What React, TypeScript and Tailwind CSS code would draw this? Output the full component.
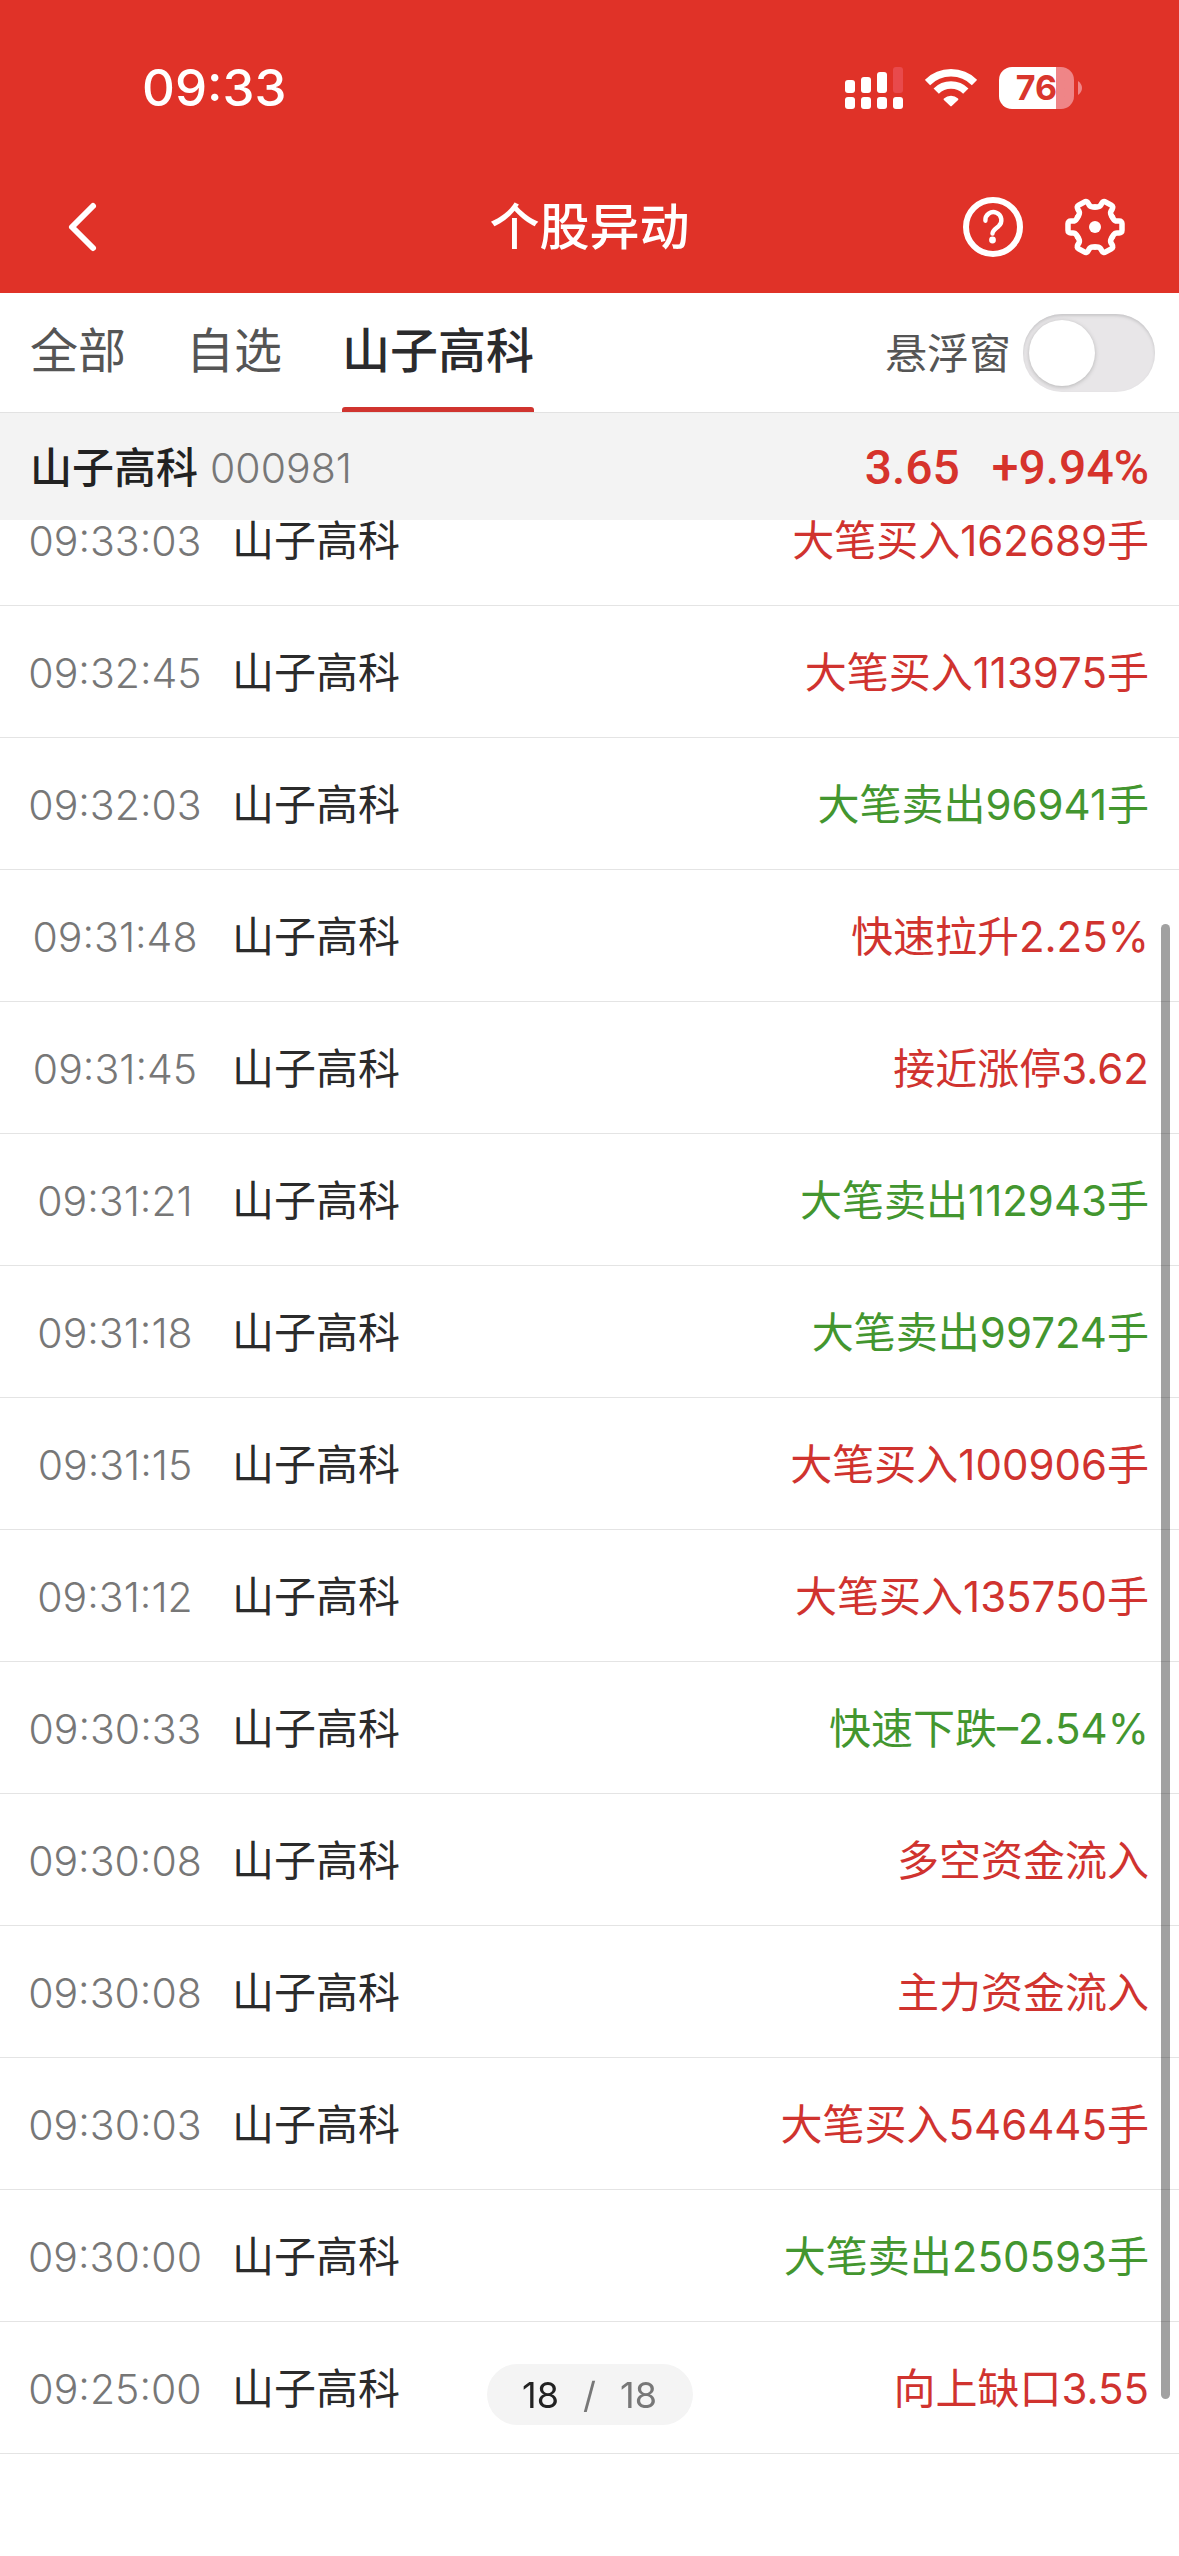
type Row = {
  time: string;
  event: string;
  tone: "up" | "down";
};

const STOCK = "山子高科";

const rows: Row[] = [
  { time: "09:33:03", event: "大笔买入162689手", tone: "up" },
  { time: "09:32:45", event: "大笔买入113975手", tone: "up" },
  { time: "09:32:03", event: "大笔卖出96941手", tone: "down" },
  { time: "09:31:48", event: "快速拉升2.25%", tone: "up" },
  { time: "09:31:45", event: "接近涨停3.62", tone: "up" },
  { time: "09:31:21", event: "大笔卖出112943手", tone: "down" },
  { time: "09:31:18", event: "大笔卖出99724手", tone: "down" },
  { time: "09:31:15", event: "大笔买入100906手", tone: "up" },
  { time: "09:31:12", event: "大笔买入135750手", tone: "up" },
  { time: "09:30:33", event: "快速下跌–2.54%", tone: "down" },
  { time: "09:30:08", event: "多空资金流入", tone: "up" },
  { time: "09:30:08", event: "主力资金流入", tone: "up" },
  { time: "09:30:03", event: "大笔买入546445手", tone: "up" },
  { time: "09:30:00", event: "大笔卖出250593手", tone: "down" },
  { time: "09:25:00", event: "向上缺口3.55", tone: "up" },
];

function SignalIcon() {
  return (
    <svg width="58" height="42" viewBox="0 0 58 42" fill="#fff" aria-hidden="true">
      <rect x="0" y="13" width="10" height="13" rx="3" />
      <rect x="16" y="10" width="10" height="16" rx="3" />
      <rect x="32" y="5" width="10" height="21" rx="3" />
      <rect x="48" y="0" width="10" height="26" rx="3" fill="#e84a4c" />
      <rect x="0" y="30" width="10" height="12" rx="3" />
      <rect x="16" y="30" width="10" height="12" rx="3" />
      <rect x="32" y="30" width="10" height="12" rx="3" />
      <rect x="48" y="30" width="10" height="12" rx="3" />
    </svg>
  );
}

function WifiIcon() {
  return (
    <svg width="52" height="38" viewBox="-26 -37 52 38" fill="none" stroke="#fff" strokeWidth="7.5" aria-hidden="true">
      <path d="M-23.5 -23.5A33.3 33.3 0 0 1 23.5 -23.5" />
      <path d="M-14.8 -14.8A20.9 20.9 0 0 1 14.8 -14.8" />
      <path d="M-6.4 -6.8A9.8 9.8 0 0 1 6.4 -6.8L0 -0.6Z" fill="#fff" stroke="#fff" strokeWidth="2" strokeLinejoin="round" />
    </svg>
  );
}

function Battery() {
  return (
    <div className="flex items-center gap-1">
      <div className="flex h-[42px] w-[75px] items-center justify-center overflow-hidden rounded-[13px] bg-linear-to-r from-white from-76% to-[#ef8587] to-76% text-[34px] leading-none font-bold text-[#d9362d]">
        76
      </div>
      <svg width="4" height="14" viewBox="0 0 4 14" aria-hidden="true">
        <path d="M0 0Q4 3 4 7T0 14Z" fill="#ef8587" />
      </svg>
    </div>
  );
}

function HelpIcon() {
  return (
    <svg width="60" height="60" viewBox="-30 -30 60 60" fill="none" stroke="#fff" strokeLinecap="round" aria-hidden="true">
      <circle r="27" strokeWidth="6" />
      <path d="M-7.6 -6.3A8 8 0 1 1 5.6 -0.8C2 2 -0.5 3.5 -0.5 6.5" strokeWidth="4.4" />
      <circle cx="-0.5" cy="13" r="3.4" fill="#fff" stroke="none" />
    </svg>
  );
}

function GearIcon() {
  const tooth =
    "M17.3 -10L18.4 -8.1Q19.8 -5.9 22 -5.9L24 -6Q27 -6.1 27 -3.2V3.2Q27 6.1 24 6L22 5.9Q19.8 5.9 18.4 8.1L17.3 10";
  return (
    <svg width="60" height="60" viewBox="-30 -30 60 60" fill="none" stroke="#fff" strokeWidth="5.5" strokeLinecap="round" aria-hidden="true">
      {[0, 60, 120, 180, 240, 300].map((deg) => (
        <path key={deg} d={tooth} transform={`rotate(${deg})`} />
      ))}
      <circle r="6" fill="#fff" stroke="none" />
    </svg>
  );
}

function Header() {
  return (
    <header className="bg-[#e03228] text-white">
      <div className="flex h-40 items-center justify-between pt-[15px] pr-[97px] pl-[142px]">
        <time className="text-[51px] leading-none font-medium">09:33</time>
        <div className="flex items-center gap-[22px]">
          <SignalIcon />
          <WifiIcon />
          <Battery />
        </div>
      </div>
      <div className="grid h-[133px] grid-cols-[1fr_auto_1fr] items-center px-[54px]">
        <button type="button" aria-label="返回" className="justify-self-start pl-3">
          <svg width="34" height="52" viewBox="0 0 34 52" fill="none" stroke="#fff" strokeWidth="6" strokeLinecap="round" strokeLinejoin="round">
            <path d="M27 5L6 26L27 47" />
          </svg>
        </button>
        <h1 className="text-[50px] leading-none font-medium">个股异动</h1>
        <div className="flex gap-[42px] justify-self-end">
          <button type="button" aria-label="帮助">
            <HelpIcon />
          </button>
          <button type="button" aria-label="设置">
            <GearIcon />
          </button>
        </div>
      </div>
    </header>
  );
}

function TabBar() {
  return (
    <div className="flex h-[120px] items-stretch justify-between border-b border-[#e2e2e2] bg-white pr-6 pl-[30px]">
      <nav className="flex gap-[60px] text-[48px] leading-none">
        <button type="button" className="border-b-[3px] border-transparent text-[#555]">
          全部
        </button>
        <button type="button" className="border-b-[3px] border-transparent text-[#555]">
          自选
        </button>
        <button type="button" className="relative border-b-[3px] border-transparent font-medium text-[#2b2b2d]">
          {STOCK}
          <span className="absolute inset-x-0 -bottom-[3px] h-[5px] rounded-t-[3px] bg-[#d0342f]" />
        </button>
      </nav>
      <label className="flex items-center gap-3 text-[42px] leading-none text-[#555]">
        <span className="pt-[3px]">悬浮窗</span>
        <input
          type="checkbox"
          role="switch"
          className="h-[78px] w-[132px] appearance-none rounded-full bg-[#e8e6e8] p-1.5 shadow-[inset_0_2px_3px_#c9c8ca] before:block before:size-[66px] before:rounded-full before:bg-white before:shadow-[0_1px_4px_#b5b5b5] checked:bg-[#e03228] checked:before:ml-auto"
        />
      </label>
    </div>
  );
}

function StockBar() {
  return (
    <div className="relative z-10 flex h-[107px] items-center justify-between bg-[#f3f3f3] px-[30px] pt-[3px] leading-none">
      <div className="flex items-center gap-3 text-[42px]">
        <span className="font-medium text-[#222]">{STOCK}</span>
        <span className="text-[41px] font-light text-[#777]">000981</span>
      </div>
      <div className="flex gap-8 font-[Roboto] text-[48px] font-medium text-[#d6332c]">
        <span>3.65</span>
        <span>+9.94%</span>
      </div>
    </div>
  );
}

export default function App() {
  return (
    <div className="min-h-screen bg-white font-[Inter,'Noto_Sans_CJK_SC',sans-serif]">
      <Header />
      <TabBar />
      <StockBar />
      <main className="relative overflow-hidden">
        {/* list is scrolled, the first row sits partly under the stock bar */}
        <table className="-mt-[46px] w-full border-separate border-spacing-0 text-[42px] leading-none">
          <tbody>
            {rows.map((row, i) => (
              <tr key={i}>
                <td className="h-[132px] w-[200px] border-b border-[#e4e4e4] pt-[3px] pl-7 text-center text-[41px] font-light text-[#777]">
                  {row.time}
                </td>
                <td className="border-b border-[#e4e4e4] pt-[3px] pl-[30px] text-[#2b2b2b]">{STOCK}</td>
                <td
                  className={
                    row.tone === "up"
                      ? "border-b border-[#e4e4e4] pt-[3px] pr-[30px] text-right text-[#d0332f]"
                      : "border-b border-[#e4e4e4] pt-[3px] pr-[30px] text-right text-[#43962f]"
                  }
                >
                  {row.event}
                </td>
              </tr>
            ))}
          </tbody>
        </table>
        <div className="absolute top-[404px] right-[9px] bottom-[55px] w-[9px] rounded-full bg-black/37" />
      </main>
      <div className="fixed bottom-[131px] left-1/2 flex h-[61px] w-[206px] -translate-x-1/2 items-center justify-center gap-6 rounded-full bg-[#f4f4f4] text-[36px] leading-none text-[#777]">
        <span className="text-[#222]">18</span>
        <span>/</span>
        <span>18</span>
      </div>
    </div>
  );
}
